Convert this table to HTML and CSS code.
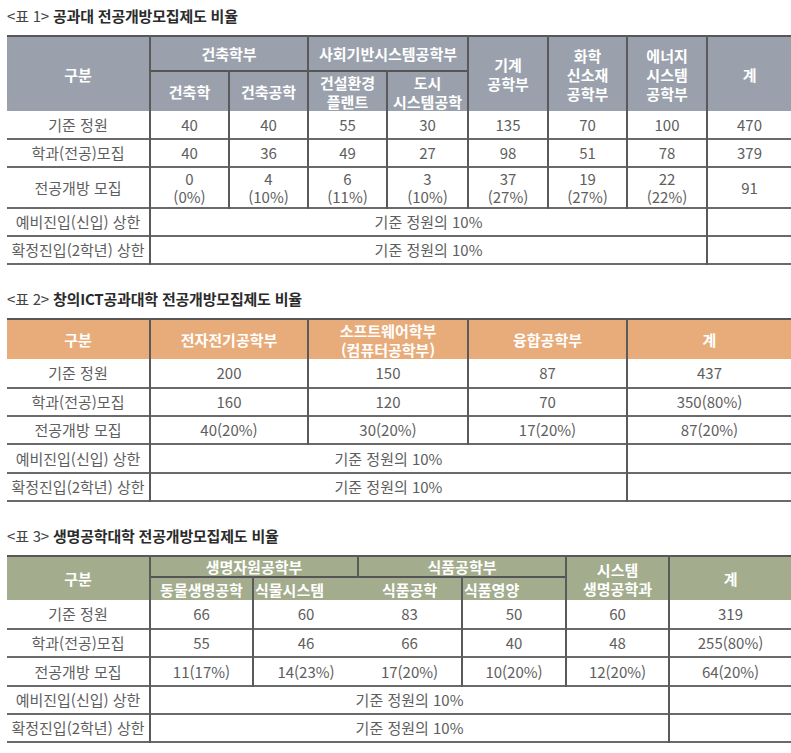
FILE: index.html
```html
<!DOCTYPE html>
<html lang="ko">
<head>
<meta charset="utf-8">
<title>전공개방모집제도 비율</title>
<link rel="stylesheet" href="styles.css">
</head>
<body>
<section class="section s1">
  <h2 class="title"><span class="num">&lt;표 1&gt;</span> 공과대 전공개방모집제도 비율</h2>
  <table class="tbl gray">
    <colgroup>
      <col style="width:143px"><col style="width:79px"><col style="width:79px"><col style="width:79px"><col style="width:81px"><col style="width:80px"><col style="width:79px"><col style="width:80px"><col style="width:84px">
    </colgroup>
    <thead>
      <tr class="r35">
        <th rowspan="2">구분</th>
        <th colspan="2">건축학부</th>
        <th colspan="2">사회기반시스템공학부</th>
        <th rowspan="2">기계<br>공학부</th>
        <th rowspan="2">화학<br>신소재<br>공학부</th>
        <th rowspan="2">에너지<br>시스템<br>공학부</th>
        <th rowspan="2">계</th>
      </tr>
      <tr class="r40">
        <th>건축학</th>
        <th>건축공학</th>
        <th>건설환경<br>플랜트</th>
        <th>도시<br>시스템공학</th>
      </tr>
    </thead>
    <tbody>
      <tr class="r28"><td>기준 정원</td><td>40</td><td>40</td><td>55</td><td>30</td><td>135</td><td>70</td><td>100</td><td>470</td></tr>
      <tr class="r28"><td>학과(전공)모집</td><td>40</td><td>36</td><td>49</td><td>27</td><td>98</td><td>51</td><td>78</td><td>379</td></tr>
      <tr class="r41 two"><td>전공개방 모집</td><td>0<br>(0%)</td><td>4<br>(10%)</td><td>6<br>(11%)</td><td>3<br>(10%)</td><td>37<br>(27%)</td><td>19<br>(27%)</td><td>22<br>(22%)</td><td>91</td></tr>
      <tr class="r28"><td>예비진입(신입) 상한</td><td colspan="7">기준 정원의 10%</td><td></td></tr>
      <tr class="r28"><td>확정진입(2학년) 상한</td><td colspan="7">기준 정원의 10%</td><td></td></tr>
    </tbody>
  </table>
</section>

<section class="section s2">
  <h2 class="title"><span class="num">&lt;표 2&gt;</span> 창의ICT공과대학 전공개방모집제도 비율</h2>
  <table class="tbl orange">
    <colgroup>
      <col style="width:143px"><col style="width:158px"><col style="width:160px"><col style="width:159px"><col style="width:164px">
    </colgroup>
    <thead>
      <tr class="r40">
        <th>구분</th>
        <th>전자전기공학부</th>
        <th>소프트웨어학부<br>(컴퓨터공학부)</th>
        <th>융합공학부</th>
        <th>계</th>
      </tr>
    </thead>
    <tbody>
      <tr class="r29"><td>기준 정원</td><td>200</td><td>150</td><td>87</td><td>437</td></tr>
      <tr class="r28"><td>학과(전공)모집</td><td>160</td><td>120</td><td>70</td><td>350(80%)</td></tr>
      <tr class="r28"><td>전공개방 모집</td><td>40(20%)</td><td>30(20%)</td><td>17(20%)</td><td>87(20%)</td></tr>
      <tr class="r29"><td>예비진입(신입) 상한</td><td colspan="3">기준 정원의 10%</td><td></td></tr>
      <tr class="r28"><td>확정진입(2학년) 상한</td><td colspan="3">기준 정원의 10%</td><td></td></tr>
    </tbody>
  </table>
</section>

<section class="section s3">
  <h2 class="title"><span class="num">&lt;표 3&gt;</span> 생명공학대학 전공개방모집제도 비율</h2>
  <table class="tbl green">
    <colgroup>
      <col style="width:143px"><col style="width:103px"><col style="width:105px"><col style="width:104px"><col style="width:104px"><col style="width:103px"><col style="width:122px">
    </colgroup>
    <thead>
      <tr class="r21">
        <th rowspan="2">구분</th>
        <th colspan="2">생명자원공학부</th>
        <th colspan="2">식품공학부</th>
        <th rowspan="2">시스템<br>생명공학과</th>
        <th rowspan="2">계</th>
      </tr>
      <tr class="r23">
        <th>동물생명공학</th>
        <th class="left nr">식물시스템</th>
        <th class="nl">식품공학</th>
        <th class="left">식품영양</th>
      </tr>
    </thead>
    <tbody>
      <tr class="r29"><td>기준 정원</td><td>66</td><td class="nr">60</td><td class="nl">83</td><td>50</td><td>60</td><td>319</td></tr>
      <tr class="r28"><td>학과(전공)모집</td><td>55</td><td class="nr">46</td><td class="nl">66</td><td>40</td><td>48</td><td>255(80%)</td></tr>
      <tr class="r29"><td>전공개방 모집</td><td>11(17%)</td><td class="nr">14(23%)</td><td class="nl">17(20%)</td><td>10(20%)</td><td>12(20%)</td><td>64(20%)</td></tr>
      <tr class="r28"><td>예비진입(신입) 상한</td><td colspan="5">기준 정원의 10%</td><td></td></tr>
      <tr class="r28"><td>확정진입(2학년) 상한</td><td colspan="5">기준 정원의 10%</td><td></td></tr>
    </tbody>
  </table>
</section>
</body>
</html>
```

FILE: styles.css
```css
html, body {
  margin: 0;
  background: #ffffff;
}

body {
  padding: 6px 0 0 7px;
  font-family: "Noto Sans CJK KR", "Noto Sans", sans-serif;
  color: #555555;
}

.section + .section {
  margin-top: 24px;
}

.s3 {
  margin-top: 26px;
}

.title {
  margin: 0 0 9px;
  font-size: 15px;
  line-height: 20px;
  font-weight: 700;
  color: #2b2b2b;
  white-space: nowrap;
  letter-spacing: -0.2px;
}

.title .num {
  font-weight: 400;
  color: #444444;
}

.tbl {
  width: 784px;
  border-collapse: collapse;
  table-layout: fixed;
  font-size: 15px;
  border-top: 2px solid #575757;
  border-bottom: 2px solid #6a6a6a;
  border-left: hidden;
  border-right: hidden;
}

.tbl th,
.tbl td {
  padding: 0;
  text-align: center;
  vertical-align: middle;
  white-space: nowrap;
  border-left: 2px solid #5a5a5a;
  border-right: 2px solid #5a5a5a;
}

.tbl th {
  color: #ffffff;
  font-weight: 700;
  line-height: 19px;
}

.tbl thead tr + tr th {
  border-top: 2px solid #555555;
}

.tbl td {
  color: #5e5e5e;
  line-height: 20px;
}

.tbl .two td {
  line-height: 18px;
}

.tbl tbody tr + tr td {
  border-top: 2px solid #6a6a6a;
}

.tbl th.left {
  text-align: left;
  padding-left: 1px;
}

.tbl .nr {
  border-right-style: hidden;
}

.tbl .nl {
  border-left-style: hidden;
}

.gray th {
  background: #9aa1ad;
}

.orange th {
  background: #e8ac7a;
}

.green th {
  background: #a3ac8c;
}

.r21 { height: 21px; }
.r23 { height: 23px; }
.r28 { height: 28px; }
.r29 { height: 29px; }
.r35 { height: 35px; }
.r40 { height: 40px; }
.r41 { height: 41px; }
```
